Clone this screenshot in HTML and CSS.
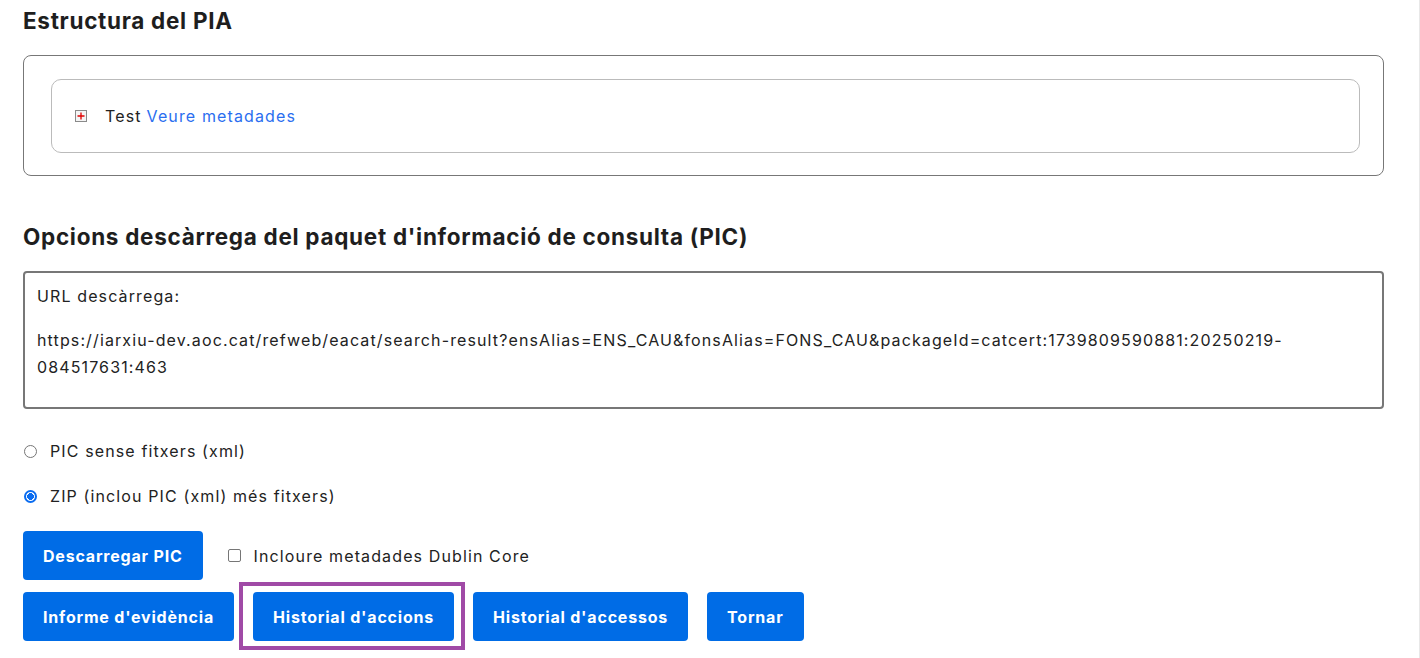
FILE: index.html
```html
<!DOCTYPE html>
<html lang="ca">
<head>
<meta charset="utf-8">
<title>PIA</title>
<link rel="stylesheet" href="styles.css">
</head>
<body>
<div class="page">
  <h2 class="title">Estructura del PIA</h2>
  <div class="outer-box">
    <div class="inner-box">
      <svg class="tree-icon" width="12" height="12" viewBox="0 0 12 12" aria-hidden="true">
        <rect x="0.5" y="0.5" width="11" height="11" fill="#f4f4f4" stroke="#8a8a8a"/>
        <path d="M6 2.5v7M2.5 6h7" stroke="#e00000" stroke-width="1.3"/>
      </svg>
      <span class="node">Test</span>
      <a class="link" href="#">Veure metadades</a>
    </div>
  </div>

  <h2 class="title title-2">Opcions descàrrega del paquet d'informació de consulta (PIC)</h2>
  <div class="url-box">
    <p class="url-label">URL descàrrega:</p>
    <p class="url-text">https://iarxiu-dev.aoc.cat/refweb/eacat/search-result?ensAlias=ENS_CAU&amp;fonsAlias=FONS_CAU&amp;packageId=catcert:1739809590881:20250219-<wbr>084517631:463</p>
  </div>

  <label class="radio-row first">
    <span class="radio"></span>
    <span>PIC sense fitxers (xml)</span>
  </label>
  <label class="radio-row">
    <span class="radio checked"></span>
    <span>ZIP (inclou PIC (xml) més fitxers)</span>
  </label>

  <div class="btn-row">
    <button class="btn">Descarregar PIC</button>
    <label class="check-row">
      <span class="checkbox"></span>
      <span>Incloure metadades Dublin Core</span>
    </label>
  </div>
  <div class="btn-row second">
    <button class="btn">Informe d'evidència</button>
    <button class="btn focused">Historial d'accions</button>
    <button class="btn">Historial d'accessos</button>
    <button class="btn">Tornar</button>
  </div>
</div>
</body>
</html>
```

FILE: styles.css
```css
* { box-sizing: border-box; }
html, body { margin: 0; padding: 0; background: #fff; }
body {
  font-family: "Inter", "Open Sans", sans-serif;
  font-size: 16px;
  letter-spacing: 1.12px;
  color: #222;
}
.page {
  width: 1420px;
  height: 658px;
  overflow: hidden;
  padding: 8px 35px 0 23px;
  border-right: 1px solid #e8e8e8;
}
.title {
  margin: 0;
  font-size: 22.5px;
  line-height: 26px;
  font-weight: 700;
  letter-spacing: 0.7px;
  color: #1e1e1e;
}
.outer-box {
  margin-top: 21px;
  border: 1px solid #777;
  border-radius: 8px;
  padding: 23px 23px 22px 27px;
}
.inner-box {
  border: 1px solid #bbb;
  border-radius: 10px;
  padding: 24px 23px;
  height: 74px;
  display: flex;
  align-items: center;
  line-height: 24px;
}
.tree-icon { margin-right: 18px; flex: none; }
.node { margin-right: 5px; }
.link { color: #2a6ef0; text-decoration: none; }
.title-2 { margin-top: 48px; }
.url-box {
  margin-top: 21px;
  border: 2px solid #777;
  border-radius: 4px;
  padding: 10px 12px 9px;
  height: 138px;
  line-height: 27px;
}
.url-box p { margin: 0; }
.url-label { margin-bottom: 17px !important; }
.url-text { overflow-wrap: anywhere; }
.radio-row {
  display: flex;
  align-items: center;
  height: 24px;
  margin-top: 21px;
}
.radio-row.first { margin-top: 30px; }
.radio {
  width: 13px;
  height: 13px;
  border: 1px solid #767676;
  border-radius: 50%;
  margin: 0 13px 0 1px;
  flex: none;
  background: #fff;
}
.radio.checked {
  border: 2px solid #0a6cf0;
  background: radial-gradient(circle, #0a6cf0 0 3.2px, #fff 3.6px);
}
.btn-row {
  display: flex;
  align-items: center;
  margin-top: 23px;
}
.btn-row.second { margin-top: 12px; gap: 19px; }
.btn {
  height: 49px;
  border: none;
  border-radius: 4px;
  background: #006ce6;
  color: #fff;
  font-family: inherit;
  font-size: 16px;
  font-weight: 700;
  letter-spacing: 0.8px;
  padding: 0 20px;
  cursor: pointer;
  position: relative;
}
.btn.focused::after {
  content: "";
  position: absolute;
  left: -14px;
  right: -11px;
  top: -10px;
  bottom: -9px;
  border: 4px solid #a04aa6;
}
.check-row {
  display: flex;
  align-items: center;
  margin-left: 25px;
}
.checkbox {
  width: 13px;
  height: 13px;
  border: 1px solid #767676;
  border-radius: 2px;
  margin-right: 13px;
  background: #fff;
}
```
